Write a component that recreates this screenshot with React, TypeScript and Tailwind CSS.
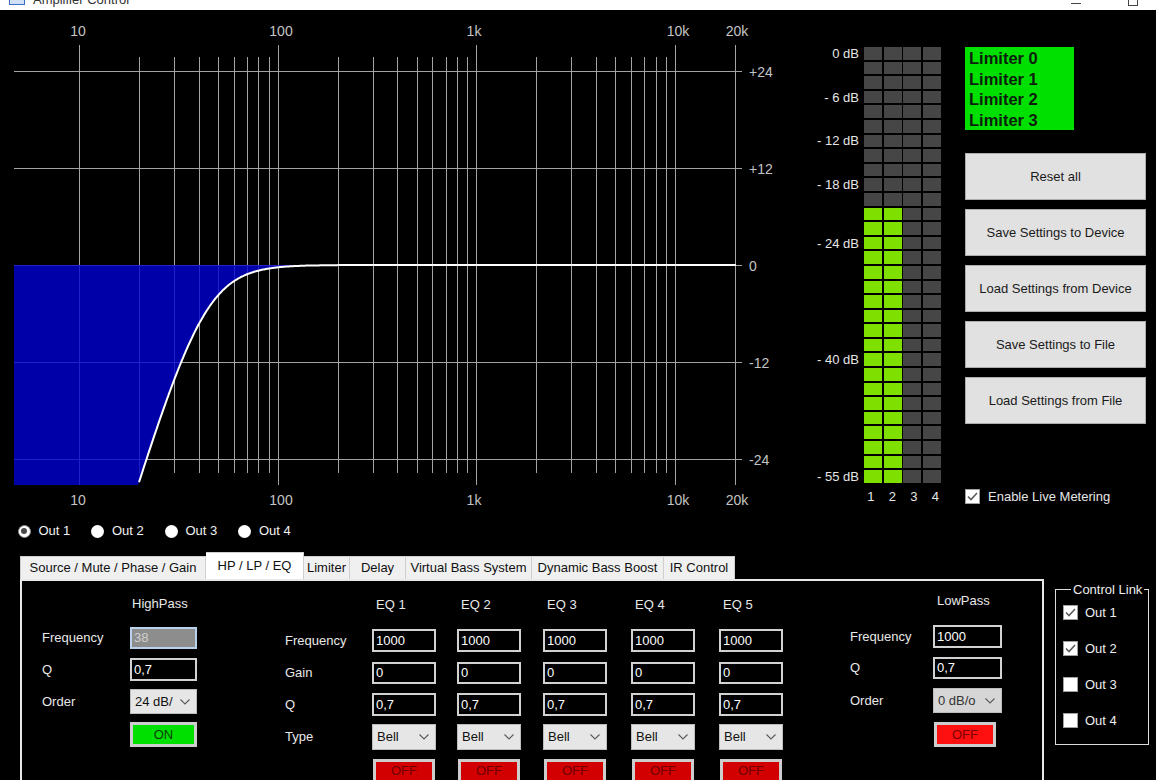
import React from 'react'

// graph geometry (page pixels)
const X0 = 79
const DEC = 198.7
const Y0 = 265
const PX_DB = 8.07
const BOTTOM = 485

const fx = (f: number) => X0 + DEC * Math.log10(f / 10)
const xToF = (x: number) => 10 * Math.pow(10, (x - X0) / DEC)
const dbY = (db: number) => Y0 - db * PX_DB

// highpass response, LR4 style
function hpDb(f: number) {
  const r4 = Math.pow(f / 43, 4)
  return 20 * Math.log10(r4 / (1 + r4))
}

const majors = [10, 100, 1000, 10000, 20000]
const minors = [2, 3, 4, 5, 6, 7, 8, 9].flatMap((m) => [m * 10, m * 100, m * 1000])
const dbLines = [24, 12, 0, -12, -24]

function ResponseGraph() {
  const pts: [number, number][] = []
  for (let x = 14; x <= 736; x += 1) {
    pts.push([x, Math.min(BOTTOM, dbY(hpDb(xToF(x))))])
  }
  const fill = `M14,${Y0} ` + pts.map(([x, y]) => `L${x},${y.toFixed(1)}`).join(' ') + ` L736,${Y0} Z`
  const visible = pts.filter(([, y]) => y < BOTTOM - 1)
  const curve = visible.map(([x, y], i) => `${i ? 'L' : 'M'}${x},${y.toFixed(1)}`).join(' ')
  const topLabels: [string, number][] = [
    ['10', 78],
    ['100', 281],
    ['1k', 474],
    ['10k', 678],
    ['20k', 737],
  ]

  return (
    <svg width="800" height="510" viewBox="0 10 800 510" className="shrink-0">
      {dbLines.map((d) => (
        <line key={d} x1="14" x2="742" y1={Math.round(dbY(d)) + 0.5} y2={Math.round(dbY(d)) + 0.5} stroke="#a3a3a3" strokeWidth="1" />
      ))}
      {minors.map((f) => (
        <line key={f} x1={Math.round(fx(f)) + 0.5} x2={Math.round(fx(f)) + 0.5} y1="57" y2="473" stroke="#a3a3a3" strokeWidth="1" />
      ))}
      {majors.map((f) => (
        <line key={f} x1={Math.round(fx(f)) + 0.5} x2={Math.round(fx(f)) + 0.5} y1="45" y2="485" stroke="#a3a3a3" strokeWidth="1" />
      ))}
      <path d={fill} fill="#0000d2" fillOpacity="0.8" />
      <path d={curve} fill="none" stroke="#ffffff" strokeWidth="2" />
      <g fontFamily="Liberation Sans, Arial, sans-serif" fontSize="14" fill="#c4c4c4">
        {topLabels.map(([t, x]) => (
          <text key={'t' + t} x={x} y="31" textAnchor="middle" dominantBaseline="central">
            {t}
          </text>
        ))}
        {topLabels.map(([t, x]) => (
          <text key={'b' + t} x={x} y="500" textAnchor="middle" dominantBaseline="central">
            {t}
          </text>
        ))}
        {dbLines.map((d) => (
          <text key={d} x="749" y={dbY(d) + 1} dominantBaseline="central">
            {d > 0 ? `+${d}` : `${d}`}
          </text>
        ))}
      </g>
    </svg>
  )
}

const meterLabels: Record<number, string> = {
  0: '0 dB',
  3: '- 6 dB',
  6: '- 12 dB',
  9: '- 18 dB',
  13: '- 24 dB',
  21: '- 40 dB',
  29: '- 55 dB',
}

function Meters() {
  return (
    <div className="w-[150px] shrink-0 pt-[37px]">
      <div className="flex flex-col gap-[2px]">
        {Array.from({ length: 30 }).map((_, r) => (
          <div key={r} className="flex h-[12.6px] items-center">
            <span className="w-[59px] whitespace-nowrap text-right text-[13px] leading-none text-[#e6e6e6]">
              {meterLabels[r] ?? ''}
            </span>
            <div className="ml-[5px] flex h-full gap-[1.5px]">
              {[0, 1, 2, 3].map((c) => (
                <span key={c} className={`h-full w-[18px] ${c < 2 && r >= 11 ? 'bg-[#7fe000]' : 'bg-[#464646]'}`} />
              ))}
            </div>
          </div>
        ))}
      </div>
      <div className="mt-[6px] flex pl-[60px] text-[13px] leading-[16px] text-[#e6e6e6]">
        {['1', '2', '3', '4'].map((n) => (
          <span key={n} className="w-[21.5px] text-center">
            {n}
          </span>
        ))}
      </div>
    </div>
  )
}

function Check({ checked }: { checked?: boolean }) {
  return (
    <span className="flex h-[15px] w-[15px] shrink-0 items-center justify-center border border-[#a0a0a0] bg-white">
      {checked && (
        <svg width="11" height="9" viewBox="0 0 11 9">
          <path d="M1 4.5 L4 7.5 L10 1" fill="none" stroke="#5c5c5c" strokeWidth="1.6" />
        </svg>
      )}
    </span>
  )
}

const sideButtons = [
  'Reset all',
  'Save Settings to Device',
  'Load Settings from Device',
  'Save Settings to File',
  'Load Settings from File',
]

function SidePanel() {
  return (
    <div className="ml-[15px] flex w-[181px] flex-col pt-[37px]">
      <div className="h-[83px] w-[109px] bg-[#00e000] pl-[4px] pt-[1px] text-[16.5px] font-bold leading-[20.5px] text-[#0d1f0d]">
        {[0, 1, 2, 3].map((n) => (
          <div key={n}>Limiter {n}</div>
        ))}
      </div>
      <div className="mt-[23px] flex flex-col gap-[9px]">
        {sideButtons.map((b) => (
          <div key={b} className="flex h-[47px] items-center justify-center border border-[#adadad] bg-[#e1e1e1] text-[13px] text-[#1a1a1a]">
            {b}
          </div>
        ))}
      </div>
      <div className="mt-[65px] flex items-center gap-[8px]">
        <Check checked />
        <span className="text-[13px] leading-[15px] text-[#e6e6e6]">Enable Live Metering</span>
      </div>
    </div>
  )
}

function Radio({ label, checked }: { label: string; checked?: boolean }) {
  return (
    <div className="flex w-[73.5px] items-center">
      <span
        className={`flex h-[13px] w-[13px] items-center justify-center rounded-full bg-white ${checked ? 'border border-[#8a8a8a]' : ''}`}
      >
        {checked && <span className="h-[6px] w-[6px] rounded-full bg-[#4a4a4a]" />}
      </span>
      <span className="ml-[8px] text-[13px] text-[#f2f2f2]">{label}</span>
    </div>
  )
}

const tabs: [string, string][] = [
  ['Source / Mute / Phase / Gain', 'w-[186px]'],
  ['HP / LP / EQ', 'w-[98px]'],
  ['Limiter', 'w-[46px]'],
  ['Delay', 'w-[56px]'],
  ['Virtual Bass System', 'w-[126px]'],
  ['Dynamic Bass Boost', 'w-[132px]'],
  ['IR Control', 'w-[71px]'],
]

function Field({ value, className }: { value: string; className: string }) {
  return (
    <div className={`flex items-center border-2 border-[#d2d2d2] bg-black pl-[2px] text-[13px] text-white ${className}`}>
      {value}
    </div>
  )
}

function Select({ value, className }: { value: string; className: string }) {
  return (
    <div className={`flex items-center justify-between border border-[#bdbdbd] pl-[4px] pr-[6px] text-[13px] ${className}`}>
      <span>{value}</span>
      <svg width="10" height="6" viewBox="0 0 10 6">
        <path d="M0.5 0.5 L5 5 L9.5 0.5" fill="none" stroke="#5a5a5a" strokeWidth="1.1" />
      </svg>
    </div>
  )
}

function Toggle({ label, className }: { label: string; className: string }) {
  return (
    <div className={`flex items-center justify-center border-[3px] border-[#cdcdcd] text-[13px] ${className}`}>{label}</div>
  )
}

function Row({ label, lw, className, children }: { label: string; lw: string; className: string; children: React.ReactNode }) {
  return (
    <div className={`flex items-center ${className}`}>
      <span className={`${lw} text-[13px] text-[#e8e8e8]`}>{label}</span>
      {children}
    </div>
  )
}

const eqCols = ['EQ 1', 'EQ 2', 'EQ 3', 'EQ 4', 'EQ 5']
const eqGap = ['', 'ml-[21px]', 'ml-[22px]', 'ml-[24px]', 'ml-[24px]']

function FilterPanel() {
  return (
    <div className="flex h-[201px] w-[1024px] items-start border-x-2 border-t-2 border-[#e8e8e8]">
      {/* HighPass */}
      <div className="ml-[20px] flex flex-col">
        <div className="ml-[90px] mt-[15px] h-[16px] text-[13px] leading-[16px] text-[#e8e8e8]">HighPass</div>
        <Row label="Frequency" lw="w-[88px]" className="mt-[15px] h-[22px]">
          <div className="flex h-full w-[67px] items-center border-2 border-[#b9d1ea] bg-[#8d8d8d] pl-[2px] text-[13px] text-[#d0d0d0]">
            38
          </div>
        </Row>
        <Row label="Q" lw="w-[88px]" className="mt-[9px] h-[23px]">
          <Field value="0,7" className="h-full w-[67px]" />
        </Row>
        <Row label="Order" lw="w-[88px]" className="mt-[8px] h-[25px]">
          <Select value="24 dB/" className="h-full w-[67px] bg-[#e6e6e6] text-[#111]" />
        </Row>
        <div className="ml-[88px] mt-[8px] h-[25px]">
          <Toggle label="ON" className="h-full w-[67px] bg-[#00e000] text-[#0b3d0b]" />
        </div>
      </div>

      {/* EQ bands */}
      <div className="ml-[88px] flex">
        <div className="flex w-[87px] flex-col text-[13px] text-[#e8e8e8]">
          <div className="mt-[16px] h-[16px]" />
          <div className="mt-[16px] flex h-[23px] items-center">Frequency</div>
          <div className="mt-[10px] flex h-[22px] items-center">Gain</div>
          <div className="mt-[9px] flex h-[23px] items-center">Q</div>
          <div className="mt-[8px] flex h-[26px] items-center">Type</div>
        </div>
        {eqCols.map((t, i) => (
          <div key={t} className={`flex w-[64px] flex-col ${eqGap[i]}`}>
            <div className="mt-[16px] h-[16px] pl-[4px] text-[13px] leading-[16px] text-[#e8e8e8]">{t}</div>
            <Field value="1000" className="mt-[16px] h-[23px]" />
            <Field value="0" className="mt-[10px] h-[22px]" />
            <Field value="0,7" className="mt-[9px] h-[23px]" />
            <Select value="Bell" className="mt-[8px] h-[26px] bg-[#e6e6e6] text-[#111]" />
            <Toggle label="OFF" className="ml-[1px] mt-[9px] h-[24px] w-[62px] bg-[#d20000] text-[#6e0000]" />
          </div>
        ))}
      </div>

      {/* LowPass */}
      <div className="ml-[67px] flex flex-col">
        <div className="ml-[87px] mt-[12px] h-[16px] text-[13px] leading-[16px] text-[#e8e8e8]">LowPass</div>
        <Row label="Frequency" lw="w-[83px]" className="mt-[16px] h-[23px]">
          <Field value="1000" className="h-full w-[69px]" />
        </Row>
        <Row label="Q" lw="w-[83px]" className="mt-[9px] h-[22px]">
          <Field value="0,7" className="h-full w-[69px]" />
        </Row>
        <Row label="Order" lw="w-[83px]" className="mt-[9px] h-[25px]">
          <Select value="0 dB/o" className="h-full w-[69px] bg-[#d6d6d6] text-[#333]" />
        </Row>
        <div className="ml-[84px] mt-[9px] h-[25px]">
          <Toggle label="OFF" className="h-full w-[62px] bg-[#ff1010] text-[#7a0000]" />
        </div>
      </div>
    </div>
  )
}

function ControlLink() {
  return (
    <fieldset className="ml-[11px] mt-[30px] h-[163px] w-[94px] border border-[#dcdcdc] pl-[7px]">
      <legend className="ml-[8px] px-[2px] text-[13px] leading-[15px] text-[#eeeeee]">Control Link</legend>
      <div className="mt-[8px] flex flex-col gap-[21px]">
        {[1, 2, 3, 4].map((n) => (
          <div key={n} className="flex items-center gap-[7px]">
            <Check checked={n <= 2} />
            <span className="text-[13px] leading-[15px] text-[#eeeeee]">Out {n}</span>
          </div>
        ))}
      </div>
    </fieldset>
  )
}

export default function App() {
  return (
    <div className="h-[780px] w-[1156px] overflow-hidden bg-black font-['Liberation_Sans',Arial,sans-serif]">
      {/* window title bar, cut off by the capture */}
      <div className="flex h-[10px] items-end overflow-hidden bg-white">
        <span className="mb-[5px] ml-[9px] h-[14px] w-[16px] border border-[#3a6fc4] bg-[#cfe0f7]" />
        <span className="mb-[3px] ml-[8px] text-[13px] leading-[15px] text-[#333]">Amplifier Control</span>
        <span className="mb-[6px] ml-auto h-[1px] w-[10px] bg-[#444]" />
        <span className="mb-[4px] ml-[47px] mr-[18px] h-[10px] w-[10px] border border-[#444]" />
      </div>

      <div className="flex h-[510px]">
        <ResponseGraph />
        <Meters />
        <SidePanel />
      </div>

      <div className="flex h-[22px] items-center pl-[17.5px]">
        <Radio label="Out 1" checked />
        <Radio label="Out 2" />
        <Radio label="Out 3" />
        <Radio label="Out 4" />
      </div>

      <div className="mt-[10px] flex pl-[20px]">
        <div className="flex flex-col">
          <div className="flex h-[27px] items-end">
            {tabs.map(([t, w], i) => (
              <div
                key={t}
                className={`flex ${w} items-center justify-center whitespace-nowrap border-r border-t border-[#cfcfcf] text-[13px] text-[#111] ${
                  i === 0 ? 'border-l' : ''
                } ${i === 1 ? 'h-[27px] bg-white' : 'h-[23px] bg-[#f0f0f0]'}`}
              >
                {t}
              </div>
            ))}
          </div>
          <FilterPanel />
        </div>
        <ControlLink />
      </div>
    </div>
  )
}
